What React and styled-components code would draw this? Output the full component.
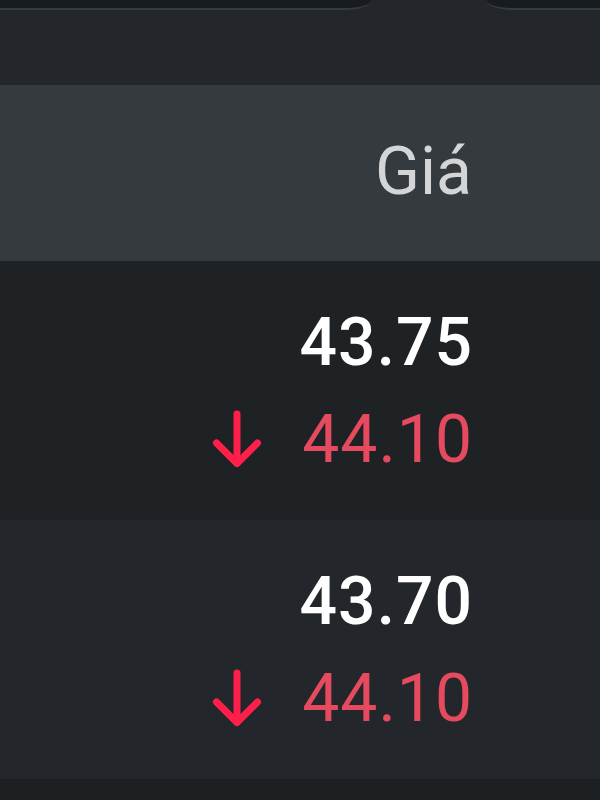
import React from 'react';
import styled, { createGlobalStyle } from 'styled-components';

const GlobalStyle = createGlobalStyle`
  body {
    margin: 0;
    background: #1d2023;
    font-family: Roboto, "Liberation Sans", sans-serif;
  }
`;

const Page = styled.div`
  width: 600px;
  height: 800px;
  overflow: hidden;
  display: flex;
  flex-direction: column;
  background: #1d2023;
`;

const TabStrip = styled.div`
  height: 10px;
  display: flex;
  justify-content: space-between;
  background: #23272b;
`;

const TabEdge = styled.div`
  width: ${(props) => props.width}px;
  background: #191c1f;
  border-bottom: 2px solid #363b3f;
  border-bottom-left-radius: ${(props) => (props.side === 'right' ? '28px 10px' : '0')};
  border-bottom-right-radius: ${(props) => (props.side === 'left' ? '28px 10px' : '0')};
`;

const Band = styled.div`
  height: 75px;
  background: #23272b;
`;

const HeaderRow = styled.div`
  height: 176px;
  box-sizing: border-box;
  padding: 0 128px 4px 0;
  display: flex;
  align-items: center;
  justify-content: flex-end;
  background: #353a3e;
  color: #d4d5d6;
  font-size: 66px;
`;

const PriceRow = styled.div`
  height: 259px;
  box-sizing: border-box;
  padding-right: 127px;
  display: flex;
  flex-direction: column;
  align-items: flex-end;
  justify-content: center;
  background: ${(props) => (props.dark ? '#1f2225' : '#23272b')};
`;

const Line = styled.div`
  display: flex;
  align-items: center;
  gap: 40px;
  height: 97px;
  font-size: 66px;
  letter-spacing: 1px;
  color: ${(props) => (props.down ? '#e64a5e' : '#ffffff')};
  font-weight: ${(props) => (props.down ? 400 : 500)};
`;

const DownArrow = () => (
  <svg width="50" height="58" viewBox="0 0 50 58">
    <g fill="none" stroke="#ff1f4a" strokeWidth="7" strokeLinecap="round" strokeLinejoin="round">
      <line x1="25" y1="4" x2="25" y2="53" />
      <polyline points="4.5,33 25,53.5 45.5,33" />
    </g>
  </svg>
);

const rows = [
  { price: '43.75', ref: '44.10', dark: true },
  { price: '43.70', ref: '44.10', dark: false },
];

const App = () => {
  return (
    <Page>
      <GlobalStyle />
      <TabStrip>
        <TabEdge side="left" width={372} />
        <TabEdge side="right" width={114} />
      </TabStrip>
      <Band />
      <HeaderRow>Giá</HeaderRow>
      {rows.map((row) => (
        <PriceRow key={row.price} dark={row.dark}>
          <Line>{row.price}</Line>
          <Line down>
            <DownArrow />
            {row.ref}
          </Line>
        </PriceRow>
      ))}
    </Page>
  );
};

export default App;
